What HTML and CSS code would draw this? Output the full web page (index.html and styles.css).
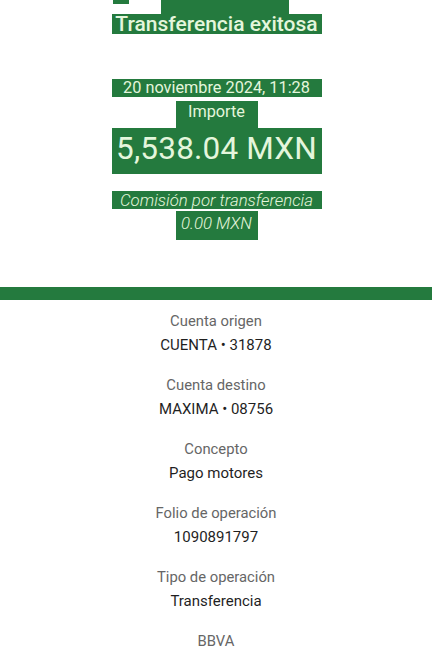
FILE: index.html
```html
<!DOCTYPE html>
<html lang="es">
<head>
    <meta charset="UTF-8">
    <meta name="viewport" content="width=device-width, initial-scale=1.0">
    <title>Transferencia exitosa</title>
    <link rel="stylesheet" href="styles.css">
</head>
<body>
    <header class="summary">
        <div class="top-bits">
            <span class="bit-small"></span>
            <span class="bit-big"></span>
        </div>
        <h1 class="tag wide title">Transferencia exitosa</h1>

        <p class="tag wide date">20 noviembre 2024, 11:28</p>
        <p class="tag narrow label-amount">Importe</p>
        <p class="tag wide amount">5,538.04 MXN</p>

        <p class="tag wide fee">Comisión por transferencia</p>
        <p class="tag narrow fee-value">0.00 MXN</p>
    </header>

    <div class="bar"></div>

    <main class="details">
        <div class="item">
            <span class="item-label">Cuenta origen</span>
            <span class="item-value">CUENTA • 31878</span>
        </div>
        <div class="item">
            <span class="item-label">Cuenta destino</span>
            <span class="item-value">MAXIMA • 08756</span>
        </div>
        <div class="item">
            <span class="item-label">Concepto</span>
            <span class="item-value">Pago motores</span>
        </div>
        <div class="item">
            <span class="item-label">Folio de operación</span>
            <span class="item-value">1090891797</span>
        </div>
        <div class="item">
            <span class="item-label">Tipo de operación</span>
            <span class="item-value">Transferencia</span>
        </div>
        <div class="item">
            <span class="item-label">BBVA</span>
        </div>
    </main>
</body>
</html>
```

FILE: styles.css
```css
/* styles.css */
body {
    font-family: Roboto, "Liberation Sans", sans-serif;
    margin: 0;
    padding: 0;
    background-color: #fff;
    overflow: hidden;
}

.summary {
    display: flex;
    flex-direction: column;
    align-items: center;
    padding-left: 1px;
}

.top-bits {
    display: flex;
    align-items: flex-start;
    width: 210px;
    height: 14px;
}

.bit-small {
    width: 16px;
    height: 4px;
    margin-left: 1px;
    background-color: #247a3e;
}

.bit-big {
    width: 128px;
    height: 14px;
    margin-left: 32px;
    background-color: #247a3e;
}

.tag {
    margin: 0;
    background-color: #247a3e;
    color: #e4f6dc;
    text-align: center;
    box-sizing: border-box;
    white-space: nowrap;
}

.wide {
    width: 210px;
}

.narrow {
    width: 82px;
}

.title {
    font-size: 21px;
    font-weight: 500;
    line-height: 20px;
    height: 20px;
}

.date {
    margin-top: 45px;
    font-size: 16.3px;
    line-height: 18px;
    height: 18px;
}

.label-amount {
    margin-top: 4px;
    font-size: 16.3px;
    line-height: 22px;
    height: 27px;
}

.amount {
    font-size: 31.5px;
    line-height: 42px;
    height: 46px;
    letter-spacing: 0.2px;
}

.fee {
    margin-top: 17px;
    font-size: 16.8px;
    font-style: italic;
    font-weight: 300;
    line-height: 18px;
    height: 18px;
}

.fee-value {
    margin-top: 2px;
    font-size: 16.8px;
    font-style: italic;
    font-weight: 300;
    line-height: 24px;
    height: 29px;
}

.bar {
    margin-top: 47px;
    height: 13px;
    background-color: #247a3e;
}

.details {
    display: flex;
    flex-direction: column;
    align-items: center;
    padding-top: 11px;
}

.item {
    display: flex;
    flex-direction: column;
    align-items: center;
    gap: 4px;
    margin-bottom: 20px;
}

.item-label {
    font-size: 14.8px;
    line-height: 20px;
    color: #666;
}

.item-value {
    font-size: 15px;
    line-height: 20px;
    color: #1f1f1f;
}
```
